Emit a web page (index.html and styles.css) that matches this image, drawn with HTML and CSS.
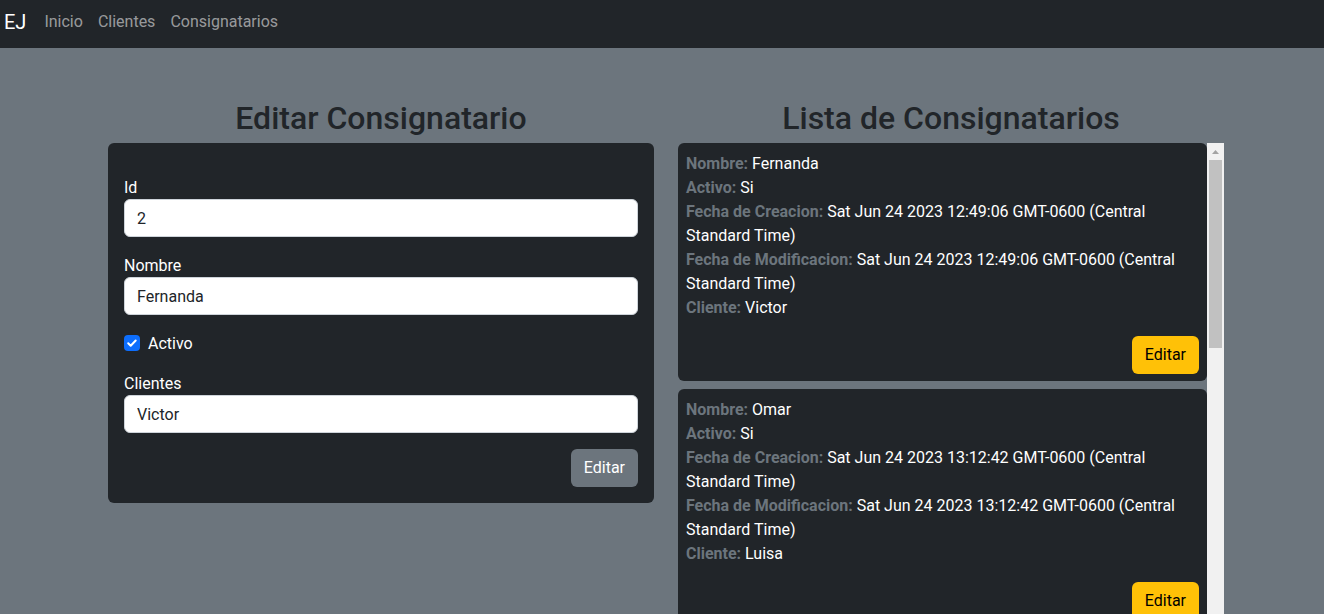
FILE: index.html
```html
<!DOCTYPE html>
<html lang="es">
<head>
<meta charset="utf-8">
<title>Consignatarios</title>
<link rel="stylesheet" href="styles.css">
</head>
<body>
<nav class="navbar">
  <a class="brand" href="#">EJ</a>
  <ul class="nav">
    <li><a class="nav-link" href="#">Inicio</a></li>
    <li><a class="nav-link" href="#">Clientes</a></li>
    <li><a class="nav-link" href="#">Consignatarios</a></li>
  </ul>
</nav>
<main class="container">
  <section class="col">
    <h1 class="title">Editar Consignatario</h1>
    <form class="card form-card">
      <div class="field">
        <label class="form-label">Id</label>
        <input class="form-control" type="text" value="2">
      </div>
      <div class="field">
        <label class="form-label">Nombre</label>
        <input class="form-control" type="text" value="Fernanda">
      </div>
      <div class="check-row">
        <span class="check"><svg width="16" height="16" viewBox="0 0 16 16"><path d="M4.2 8.2l2.5 2.5 5-5.2" fill="none" stroke="#fff" stroke-width="2" stroke-linecap="round" stroke-linejoin="round"/></svg></span>
        <span class="check-label">Activo</span>
      </div>
      <div class="field">
        <label class="form-label">Clientes</label>
        <input class="form-control" type="text" value="Victor">
      </div>
      <div class="actions">
        <button class="btn btn-secondary" type="button">Editar</button>
      </div>
    </form>
  </section>
  <section class="col">
    <h1 class="title">Lista de Consignatarios</h1>
    <div class="list-box">
      <div class="list">
        <article class="card item">
          <p><span class="lbl">Nombre:</span> Fernanda</p>
          <p><span class="lbl">Activo:</span> Si</p>
          <p><span class="lbl">Fecha de Creacion:</span> Sat Jun 24 2023 12:49:06 GMT-0600 (Central Standard Time)</p>
          <p><span class="lbl">Fecha de Modificacion:</span> Sat Jun 24 2023 12:49:06 GMT-0600 (Central Standard Time)</p>
          <p><span class="lbl">Cliente:</span> Victor</p>
          <div class="actions"><button class="btn btn-warning" type="button">Editar</button></div>
        </article>
        <article class="card item">
          <p><span class="lbl">Nombre:</span> Omar</p>
          <p><span class="lbl">Activo:</span> Si</p>
          <p><span class="lbl">Fecha de Creacion:</span> Sat Jun 24 2023 13:12:42 GMT-0600 (Central Standard Time)</p>
          <p><span class="lbl">Fecha de Modificacion:</span> Sat Jun 24 2023 13:12:42 GMT-0600 (Central Standard Time)</p>
          <p><span class="lbl">Cliente:</span> Luisa</p>
          <div class="actions"><button class="btn btn-warning" type="button">Editar</button></div>
        </article>
      </div>
      <div class="scrollbar">
        <div class="scroll-arrow"><svg width="17" height="17" viewBox="0 0 17 17"><path d="M5 11h7L8.5 7z" fill="#a3a3a3"/></svg></div>
        <div class="scroll-thumb"></div>
      </div>
    </div>
  </section>
</main>
</body>
</html>
```

FILE: styles.css
```css
html, body {
  overflow: hidden;
}

body {
  margin: 0;
  background: #6c757d;
  font-family: "Roboto", "Liberation Sans", sans-serif;
  font-size: 16px;
  line-height: 1.5;
  color: #212529;
}

.navbar {
  height: 48px;
  box-sizing: border-box;
  background: #212529;
  display: flex;
  align-items: center;
  padding: 0 4px 4px;
}

.brand {
  font-size: 20px;
  line-height: 30px;
  color: #fff;
  text-decoration: none;
  margin-right: 10px;
}

.nav {
  display: flex;
  list-style: none;
  margin: 0;
  padding: 0;
}

.nav-link {
  display: block;
  padding: 0 7px 0 8px;
  color: rgba(255, 255, 255, 0.55);
  text-decoration: none;
}

.container {
  display: grid;
  grid-template-columns: 546px 546px;
  column-gap: 24px;
  padding: 51px 0 0 108px;
}

.title {
  margin: 0 0 6px;
  font-size: 32px;
  font-weight: 500;
  line-height: 38px;
  text-align: center;
  color: #212529;
}

.card {
  background: #212529;
  border-radius: 6px;
  color: #fff;
}

.form-card {
  display: flex;
  flex-direction: column;
  gap: 16px;
  padding: 32px 16px 16px;
  margin: 0;
}

.form-label {
  display: block;
  line-height: 24px;
  padding-top: 1px;
  margin-bottom: -1px;
}

.form-control {
  display: block;
  width: 100%;
  height: 38px;
  box-sizing: border-box;
  padding: 6px 12px;
  border: 1px solid #ced4da;
  border-radius: 6px;
  background: #fff;
  color: #212529;
  font: inherit;
  margin: 0;
}

.check-row {
  display: flex;
  align-items: center;
  gap: 8px;
  height: 24px;
}

.check-label {
  padding-top: 1px;
}

.check {
  width: 16px;
  height: 16px;
  border-radius: 4px;
  background: #0d6efd;
  display: flex;
}

.actions {
  display: flex;
  justify-content: flex-end;
}

.btn {
  height: 38px;
  padding: 6px 13px;
  border: none;
  border-radius: 6px;
  font: inherit;
  line-height: 24px;
}

.btn-secondary {
  background: #6c757d;
  color: #fff;
}

.btn-warning {
  background: #ffc107;
  color: #000;
}

.list-box {
  display: flex;
  height: 471px;
  overflow: hidden;
}

.list {
  width: 529px;
  display: flex;
  flex-direction: column;
  gap: 8px;
}

.item {
  padding: 9px 8px 7px;
}

.item p {
  margin: 0;
  line-height: 24px;
}

.item .actions {
  margin-top: 16px;
}

.lbl {
  font-weight: 700;
  color: #6c757d;
}

.scrollbar {
  width: 17px;
  background: #f1f1f1;
  flex: none;
}

.scroll-arrow {
  height: 17px;
}

.scroll-arrow svg {
  display: block;
}

.scroll-thumb {
  margin: 0 2px;
  height: 188px;
  background: #c1c1c1;
}
```
